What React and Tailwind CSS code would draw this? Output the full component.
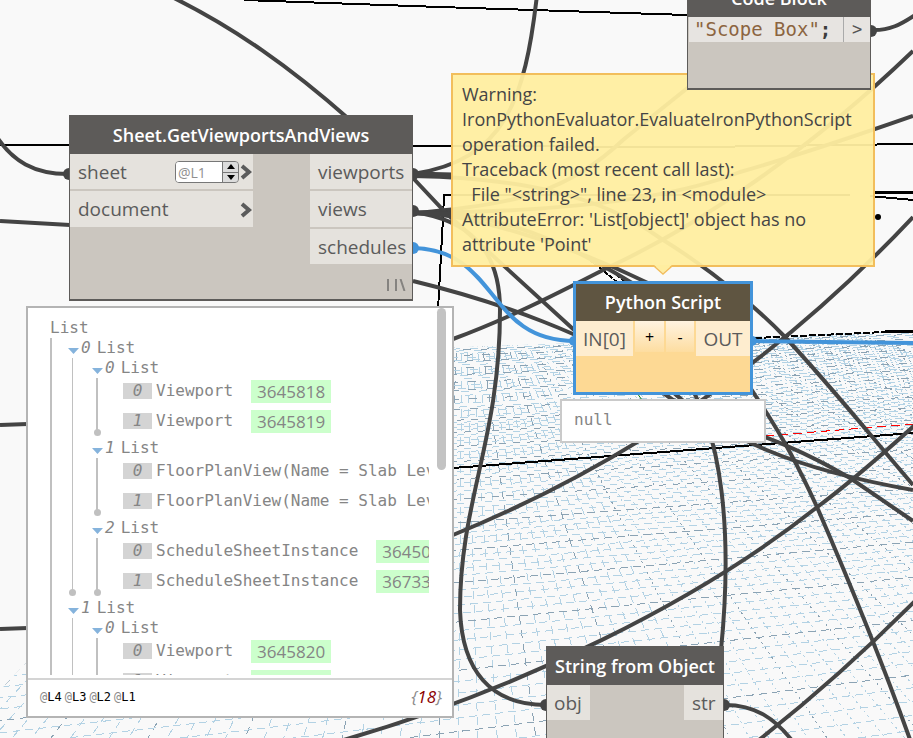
import React from "react";

const UI = "font-['Open_Sans','Noto_Sans',sans-serif]";
const MONO = "font-['DejaVu_Sans_Mono','Liberation_Mono',monospace]";

/* ---------- background grid: a finite plane seen in perspective ---------- */

const VP = { x: 463, y: 205 };
const FAR_X = 4700;

const depthLines = Array.from({ length: 112 }, (_, i) => {
  const k = i - 6;
  const s = 0.137 + (k - 25) * 0.0364;
  return { s, major: (((k % 5) + 5) % 5) === 0, key: i };
});

const crossLines = Array.from({ length: 118 }, (_, i) => {
  const z = 1 / (0.00715 - i * 0.00005);
  return { y: VP.y + z, major: i % 5 === 0, key: i };
}).filter(({ key }) => key > 48 || key % 2 === 0 || key % 5 === 0);

function Grid() {
  return (
    <g clipPath="url(#plane)" strokeWidth="1" shapeRendering="crispEdges">
      {depthLines.map(({ s, major, key }) => (
        <line
          key={key}
          x1={VP.x + s * 120}
          y1={VP.y + 120}
          x2={VP.x + s * 540}
          y2={VP.y + 540}
          stroke={major ? "#8ba3b4" : "#b3d2e4"}
          strokeDasharray={s > 0.5 ? "2 4" : "8 6"}
        />
      ))}
      {crossLines.map(({ y, major, key }) => {
        const slope = (VP.y - y) / (FAR_X - 460);
        return (
          <line
            key={key}
            x1={-60}
            y1={y + slope * -520}
            x2={940}
            y2={y + slope * 480}
            stroke={major ? "#8ba3b4" : "#b3d2e4"}
            strokeDasharray={key < 50 ? "8 10" : key < 80 ? "7 7" : "8 5"}
            strokeDashoffset={key * 7}
          />
        );
      })}
    </g>
  );
}

const WIRES = [
  "M170 -4 C235 28 290 67 350 120",
  "M-5 134 C12 162 35 174 68 174",
  "M0 221 L70 225",
  "M0 425 L28 424",
  "M0 629 L28 628",
  "M537 -5 C525 100 505 160 413 174",
  "M413 213 C520 205 570 190 623 140 C650 118 670 102 700 78",
  "M413 213 C560 212 670 200 740 172 C800 155 850 138 913 116",
  "M453 339 C510 318 560 292 607 268 C700 225 810 150 913 51",
  "M453 535 C600 475 760 380 913 217",
  "M413 178 L445 212 L573 329 L680 405 C740 430 780 437 850 478 L913 521",
  "M413 213 C500 210 570 245 632 283 C700 320 740 370 755 395 C785 440 800 470 817 507 C840 560 878 650 912 745",
  "M413 176 C520 178 600 195 660 238 C720 275 765 316 785 337 C830 385 870 435 913 485",
  "M413 213 C460 212 560 240 650 284",
  "M413 212 C470 220 500 250 500 310 C500 440 460 500 460 610 C462 670 490 705 546 705",
  "M680 370 C725 430 732 540 721 650",
  "M413 281 C500 302 590 335 660 380 C720 440 800 470 913 490",
  "M340 741 C520 690 700 600 816 508 C850 483 885 452 915 425",
  "M755 743 C800 708 850 666 915 601",
  "M725 705 C755 705 775 718 794 743",
  "M874 30 C890 30 900 25 915 15",
];

function Canvas() {
  return (
    <svg className="absolute left-0 top-0" width="913" height="738" viewBox="0 0 913 738" aria-hidden="true">
      <defs>
        <clipPath id="plane">
          <polygon points="-46,738 325,352 913,331 913,738" />
        </clipPath>
      </defs>
      <Grid />
      <g fill="none" stroke="#000" strokeWidth="2" shapeRendering="crispEdges">
        <path d="M244 0 L440 7 L687 15" />
        <path d="M0 145 L69 145 M413 146 L700 147 L913 144" />
        <path d="M438 310 L443 218 L444 195 L850 195" />
        <path d="M875 192 L913 192" strokeWidth="3" />
        <path d="M870 196 L913 200" />
        <path d="M453 468 L913 433" />
        <path d="M755 338 L885 332" strokeDasharray="7 2" />
        <path d="M885 331 L913 331" strokeWidth="3" />
        <path d="M590 260 L617 282 M598 260 L627 283" strokeDasharray="5 1" />
      </g>
      <path d="M765 436 L913 424" stroke="#f00" strokeDasharray="9 5" shapeRendering="crispEdges" />
      <path d="M637 393 L642 400" stroke="#0a7a1a" />
      <circle cx="878" cy="217" r="3" fill="#000" />
      <g fill="none" stroke="#444" strokeWidth="4">
        {WIRES.map((d) => (
          <path key={d} d={d} />
        ))}
        <path d="M413 174 L453 175 M413 213 L453 214" strokeWidth="5" />
      </g>
      <g fill="none" stroke="#4394da" strokeWidth="4">
        <path d="M413 248 C500 250 485 341 575 341" />
        <path d="M750 341 L913 343" />
      </g>
      <g fill="#444">
        <circle cx="69" cy="174" r="6" />
        <circle cx="413" cy="174" r="6" />
        <circle cx="413" cy="211" r="6" />
        <circle cx="546" cy="705" r="6" />
        <circle cx="724" cy="705" r="6" />
        <circle cx="871" cy="31" r="6" />
      </g>
      <g fill="#4394da">
        <circle cx="413" cy="248" r="6" />
        <circle cx="574" cy="341" r="5" />
        <circle cx="752" cy="341" r="5" />
      </g>
    </svg>
  );
}

/* ------------------------------- nodes ----------------------------------- */

function NodeTitle({ children }) {
  return (
    <h2 className="flex h-[39px] items-center justify-center whitespace-nowrap bg-[#5d5b59] pt-px text-[18px] font-semibold text-white">
      {children}
    </h2>
  );
}

function Port({ children, className = "" }) {
  return <li className={`flex items-center bg-[#e5e2dd] pt-px text-[19px] ${className}`}>{children}</li>;
}

function Chevron() {
  return (
    <svg width="12" height="16" viewBox="0 0 12 16" aria-hidden="true">
      <path d="M2 2 L9 8 L2 14" fill="none" stroke="#5b5b5b" strokeWidth="4" />
    </svg>
  );
}

function SheetNode() {
  return (
    <section className="absolute left-[69px] top-[115px] w-[344px] text-[#5b5b5b]">
      <NodeTitle>Sheet.GetViewportsAndViews</NodeTitle>
      <div className="relative flex h-[147px] justify-between border-x border-b-2 border-[#5d5b59] bg-[#cbc6bf]">
        <ul className="flex w-[183px] flex-col gap-[2px]">
          <Port className="h-[35px] justify-between pl-2 pr-px">
            <label htmlFor="sheet-level">sheet</label>
            <span className="flex items-center">
              <span className="flex h-[22px] w-[64px] overflow-hidden rounded-sm border border-[#777] bg-white">
                <input
                  id="sheet-level"
                  defaultValue="@L1"
                  className="w-0 min-w-0 grow bg-white pl-[2px] text-[14px] leading-none text-[#8f8f8f] outline-none"
                />
                <span className="flex w-4 flex-col border-l border-[#777] bg-[#777]">
                  <button type="button" aria-label="Increase level" className="mb-px flex flex-1 items-center justify-center bg-[#dcdcdc]">
                    <svg width="8" height="5" viewBox="0 0 8 5"><path d="M0 5 L4 0 L8 5Z" /></svg>
                  </button>
                  <button type="button" aria-label="Decrease level" className="flex flex-1 items-center justify-center bg-[#dcdcdc]">
                    <svg width="8" height="5" viewBox="0 0 8 5"><path d="M0 0 L4 5 L8 0Z" /></svg>
                  </button>
                </span>
              </span>
              <span className="pl-px"><Chevron /></span>
            </span>
          </Port>
          <Port className="h-[36px] justify-between pl-2 pr-px">
            <span>document</span>
            <Chevron />
          </Port>
        </ul>
        <ul className="flex w-[102px] flex-col gap-[2px]">
          <Port className="h-[35px] pl-2">viewports</Port>
          <Port className="h-[36px] pl-2">views</Port>
          <Port className="h-[35px] pl-2">schedules</Port>
        </ul>
        <svg className="absolute bottom-2 right-[6px]" width="20" height="12" viewBox="0 0 20 12" aria-hidden="true">
          <path d="M2 0 V12 M10 0 V12 M14.500 0 L18.500 12" stroke="#858380" strokeWidth="2" fill="none" />
        </svg>
      </div>
    </section>
  );
}

function CodeBlockNode() {
  return (
    <section className="absolute left-[687px] top-[-22px] w-[184px]">
      <NodeTitle>Code Block</NodeTitle>
      <div className="h-[73px] border-x border-b-2 border-[#5d5b59] bg-[#cbc6bf] pl-px">
        <div className={`flex h-[25px] ${MONO}`}>
          <code className={`grow whitespace-pre bg-[#e7e4e1] pl-[5px] text-[19px] leading-[25px] text-[#8c6440] ${MONO}`}>
            "Scope Box"<b className="text-[#3c3c3c]">;</b>
          </code>
          <span className="flex w-[27px] items-center justify-center border-l border-[#aaa] bg-[#e7e4e1] text-[17px] text-[#555]">&gt;</span>
        </div>
      </div>
    </section>
  );
}

function PythonNode() {
  return (
    <section className="absolute left-[573px] top-[281px] w-[180px] border-[3px] border-[#4394da] bg-[#fdd994] text-[#5b5b5b]">
      <h2 className="flex h-[37px] items-center justify-center bg-[#5f5541] text-[18px] font-semibold text-white">Python Script</h2>
      <div className="flex h-[71px] items-start justify-between">
        <span className="flex h-[35px] w-[57px] items-center justify-center bg-[#feedcf] pt-px text-[19px]">IN[0]</span>
        <button type="button" className="h-[31px] w-[29px] bg-linear-to-b from-[#fff3e0] to-[#fddda0] text-[16px] text-black">+</button>
        <button type="button" className="h-[31px] w-[28px] bg-linear-to-b from-[#fff3e0] to-[#fddda0] text-[16px] text-black">-</button>
        <span className="flex h-[35px] w-[54px] items-center justify-center bg-[#feedcf] pt-px text-[19px]">OUT</span>
      </div>
    </section>
  );
}

function StringNode() {
  return (
    <section className="absolute left-[546px] top-[646px] w-[178px] text-[#5b5b5b]">
      <NodeTitle>String from Object</NodeTitle>
      <ul className="flex h-[120px] items-start justify-between border-x border-[#5d5b59] bg-[#cbc6bf]">
        <Port className="h-[35px] w-[43px] pl-[7px]">obj</Port>
        <Port className="h-[35px] w-[39px] pl-2">str</Port>
      </ul>
    </section>
  );
}

function Warning() {
  return (
    <div
      role="alert"
      className="absolute left-[451px] top-[73px] w-[424px] border-2 border-[#f2be5c] bg-[#ffeea0]/95 px-[9px] pb-[8px] pt-[7px] text-[18px] leading-[25px] text-[#454545]"
    >
      <p className="whitespace-pre">{`Warning:
IronPythonEvaluator.EvaluateIronPythonScript
operation failed.
Traceback (most recent call last):
  File "<string>", line 23, in <module>
AttributeError: 'List[object]' object has no
attribute 'Point'`}</p>
      <svg className="absolute left-[201px] top-full" width="18" height="10" viewBox="0 0 18 10" aria-hidden="true">
        <path d="M0 0 L9 8 L18 0Z" fill="#ffeea0" />
        <path d="M0 1 L9 9 L18 1" fill="none" stroke="#f2be5c" strokeWidth="1.500" />
      </svg>
    </div>
  );
}

/* --------------------------- preview bubble ------------------------------ */

const TREE = [
  {
    lists: [
      [["Viewport", "3645818"], ["Viewport", "3645819"]],
      [["FloorPlanView(Name = Slab Lev"], ["FloorPlanView(Name = Slab Lev"]],
      [["ScheduleSheetInstance", "36450"], ["ScheduleSheetInstance", "36733"]],
    ],
  },
  { lists: [[["Viewport", "3645820"], ["Viewport", "3645821"]]] },
];

function ListHead({ index }) {
  return (
    <button type="button" className="flex h-5 items-center whitespace-pre">
      <svg className="mr-[2px] mt-[6px]" width="11" height="6" viewBox="0 0 11 6" aria-hidden="true">
        <path d="M0 0 H11 L5.500 6Z" fill="#85b3dc" />
      </svg>
      <i>{index}</i>
      <span className="pl-[6px]">List</span>
    </button>
  );
}

function EndDot({ className }) {
  return <span className={`absolute size-[7px] rounded-full bg-[#c0c0c0] ${className}`} />;
}

function Item({ index, name, value }) {
  return (
    <li className="flex h-[30px] items-center whitespace-pre pb-1">
      <i className="flex h-4 w-[29px] shrink-0 items-center justify-center bg-[#d4d4d4]">{index}</i>
      <span className="shrink-0 pl-1">{name}</span>
      {value && (
        <span className={`ml-[18px] h-[23px] shrink-0 bg-[#ccffcc] px-[6px] text-[17px] leading-[24px] ${UI}`}>{value}</span>
      )}
    </li>
  );
}

function Preview() {
  return (
    <section className="absolute left-[26px] top-[306px] w-[428px] border-2 border-[#b4b4b4] bg-white">
      <div className="flex h-[372px] gap-[8px] border-b-2 border-[#d4d4d4] pr-[6px]">
        <div className={`mb-[3px] min-w-0 grow overflow-hidden pl-[22px] pt-[10px] text-[16px] leading-5 text-[#858585] ${MONO}`}>
          <p className="h-5">List</p>
          <ul className="border-l-2 border-[#c0c0c0] pl-4">
            {TREE.map((group, g) => (
              <li key={g}>
                <ListHead index={g} />
                <ul className="relative ml-[4px] border-l border-[#c0c0c0] pl-[19px]">
                  {group.lists.map((items, l) => (
                    <li key={l}>
                      <ListHead index={l} />
                      <ul className="relative mb-1 ml-[4px] h-14 border-l-2 border-[#c0c0c0] pl-[25px]">
                        {items.map(([name, value], n) => (
                          <Item key={n} index={n} name={name} value={value} />
                        ))}
                        <EndDot className="-bottom-[2px] -left-1" />
                      </ul>
                    </li>
                  ))}
                  <EndDot className="-bottom-[2px] -left-1" />
                </ul>
              </li>
            ))}
          </ul>
        </div>
        <div className="h-[162px] w-[9px] shrink-0 rounded-full bg-[#c3c3c3]" />
      </div>
      <footer className={`flex h-[36px] items-center justify-between pb-[2px] pl-3 pr-[10px] text-[#8a8a8a] ${MONO}`}>
        <p className="flex gap-[3px] text-[12px]">
          {["L4", "L3", "L2", "L1"].map((level) => (
            <span key={level}>@<span className="text-black">{level}</span></span>
          ))}
        </p>
        <i className={`text-[17px] ${UI}`}>{"{"}<span className="text-[#8b0000]">18</span>{"}"}</i>
      </footer>
    </section>
  );
}

export default function App() {
  return (
    <main className={`relative h-screen w-full overflow-hidden bg-[#f9f9f9] ${UI}`}>
      <Canvas />
      <SheetNode />
      <Warning />
      <CodeBlockNode />
      <PythonNode />
      <output className={`absolute left-[560px] top-[399px] flex h-[44px] w-[206px] items-center border-2 border-[#cacaca] bg-white pb-[2px] pl-3 text-[16px] text-[#858585] ${MONO}`}>
        null
      </output>
      <StringNode />
      <Preview />
    </main>
  );
}
